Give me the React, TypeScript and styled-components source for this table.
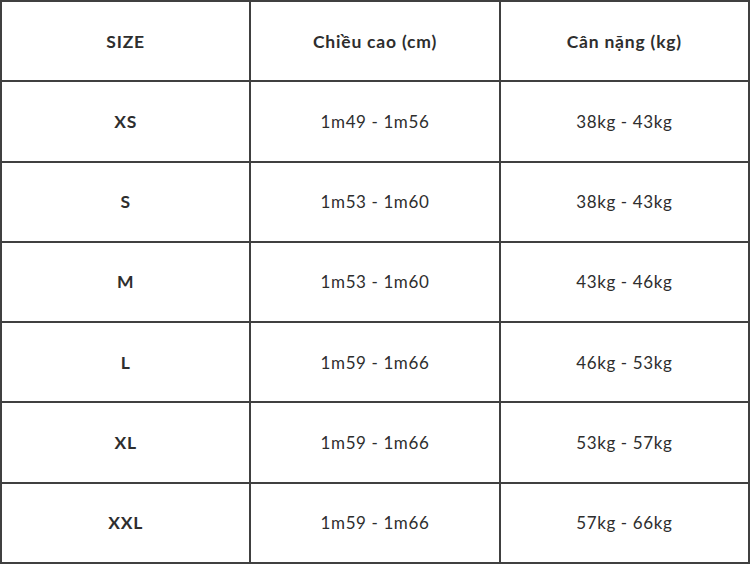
import React from 'react';
import styled, { createGlobalStyle } from 'styled-components';

type Row = {
  size: string;
  height: string;
  weight: string;
};

const rows: Row[] = [
  { size: 'XS', height: '1m49 - 1m56', weight: '38kg - 43kg' },
  { size: 'S', height: '1m53 - 1m60', weight: '38kg - 43kg' },
  { size: 'M', height: '1m53 - 1m60', weight: '43kg - 46kg' },
  { size: 'L', height: '1m59 - 1m66', weight: '46kg - 53kg' },
  { size: 'XL', height: '1m59 - 1m66', weight: '53kg - 57kg' },
  { size: 'XXL', height: '1m59 - 1m66', weight: '57kg - 66kg' },
];

const GlobalStyle = createGlobalStyle`
  html, body {
    margin: 0;
    padding: 0;
    background: #fff;
  }
  body {
    font-family: Lato, "Noto Sans", "Liberation Sans", sans-serif;
  }
`;

const Table = styled.div`
  width: 750px;
  height: 564px;
  box-sizing: border-box;
  display: grid;
  grid-template-columns: 1fr 1fr 1fr;
  grid-template-rows: repeat(7, 1fr);
  gap: 2px;
  border: 2px solid #404040;
  background: #404040;
`;

const Cell = styled.div<{ $head?: boolean }>`
  background: #fff;
  display: flex;
  align-items: center;
  justify-content: center;
  color: #2e2e2e;
  font-size: ${(p) => (p.$head ? '17.5px' : '17px')};
  font-weight: ${(p) => (p.$head ? 700 : 400)};
  letter-spacing: ${(p) => (p.$head ? '0.8px' : '0.6px')};
`;

export default function App() {
  return (
    <>
      <GlobalStyle />
      <Table>
        <Cell $head>SIZE</Cell>
        <Cell $head>Chiều cao (cm)</Cell>
        <Cell $head>Cân nặng (kg)</Cell>
        {rows.map((r) => (
          <React.Fragment key={r.size}>
            <Cell $head>{r.size}</Cell>
            <Cell>{r.height}</Cell>
            <Cell>{r.weight}</Cell>
          </React.Fragment>
        ))}
      </Table>
    </>
  );
}
